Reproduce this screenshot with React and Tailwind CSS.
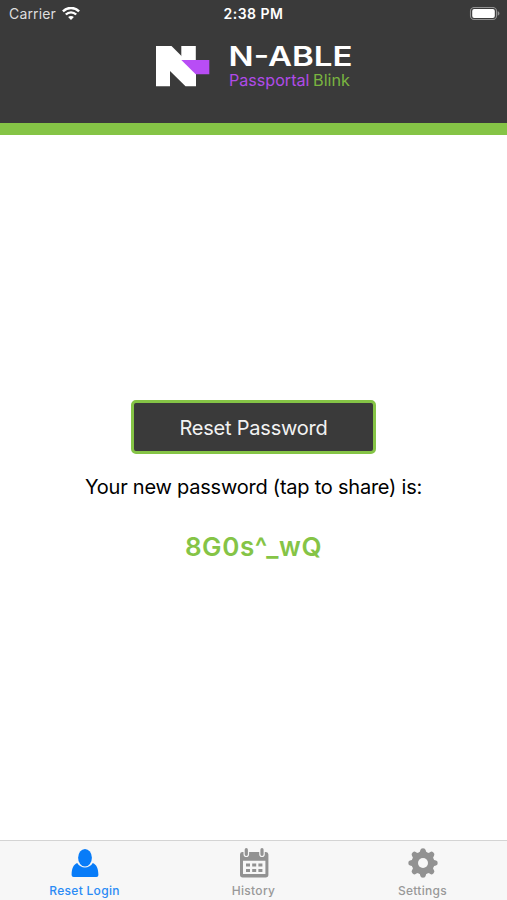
function Wifi() {
  return (
    <svg className="h-[14px] w-[18px]" viewBox="0 0 18 14" fill="none" stroke="#fff" strokeWidth="2.4">
      <path d="M0.9 4.3C5.5 -0.2 12.5 -0.2 17.1 4.3" />
      <path d="M3.8 7.5C6.8 4.6 11.2 4.6 14.2 7.5" />
      <path d="M9 13.1L6.1 10.1C7.7 8.5 10.3 8.5 11.9 10.1Z" fill="#fff" stroke="none" />
    </svg>
  );
}

function Battery() {
  return (
    <svg className="h-[14px] w-[32px]" viewBox="0 0 32 14">
      <rect x="1.5" y="0.5" width="26" height="12" rx="3.6" fill="none" stroke="#929292" strokeWidth="1.1" />
      <rect x="3.2" y="2" width="22.6" height="9" rx="2" fill="#fff" />
      <path d="M28.7 4.3C31 5 31 8 28.7 8.7Z" fill="#929292" />
    </svg>
  );
}

function Logo() {
  return (
    <svg className="h-[50px] w-[200px] overflow-visible" viewBox="0 0 200 50">
      <path d="M3 4H18.5L43 28.5V44.2H32.5L17 29V44.2H3Z" fill="#fff" />
      <path d="M28.3 4H42.8V18H28.3Z" fill="#fff" />
      <path d="M28.3 18H56.3V32.2H42.7Z" fill="#b84df5" />
      <text x="75.6" y="24" fill="#fff" fontFamily="Inter, sans-serif" fontWeight="600" fontSize="27" textLength="124" lengthAdjust="spacingAndGlyphs">N-ABLE</text>
      <text x="76" y="44.3" fill="#b04be8" fontFamily="Inter, sans-serif" fontSize="16.5" textLength="80.5" lengthAdjust="spacingAndGlyphs">Passportal</text>
      <text x="160" y="44.3" fill="#79b440" fontFamily="Inter, sans-serif" fontSize="16.5" textLength="37" lengthAdjust="spacingAndGlyphs">Blink</text>
    </svg>
  );
}

function PersonIcon() {
  return (
    <svg className="h-[32px] w-[32px]" viewBox="0 0 32 32" fill="#087cf8">
      <ellipse cx="16" cy="10.7" rx="6.9" ry="8.8" />
      <path d="M8.2 16.1C4.3 17.9 2.7 21.5 2.6 28Q2.6 30 4.6 30H27.4Q29.4 30 29.4 28C29.3 21.5 27.7 17.9 23.8 16.1C20.3 22 11.7 22 8.2 16.1Z" />
    </svg>
  );
}

function CalendarIcon() {
  return (
    <svg className="h-[32px] w-[32px]" viewBox="0 0 32 32">
      <path fillRule="evenodd" d="M4 5H28Q30.4 5 30.4 7.5V27.8Q30.4 30.5 27.7 30.5H4.7Q2 30.5 2 27.8V7.5Q2 5 4 5ZM5 13.8V27H27.4V13.8Z" fill="#929292" />
      <g stroke="#f7f7f7" strokeWidth="5.6" strokeLinecap="round"><path d="M8.3 3V7.3M24 3V7.3" /></g>
      <g stroke="#929292" strokeWidth="3.2" strokeLinecap="round"><path d="M8.3 2.7V7.3M24 2.7V7.3" /></g>
      <path d="M8 16.4H12V19.4H8ZM14.2 16.4H18.2V19.4H14.2ZM20.4 16.4H24.4V19.4H20.4ZM8 21.9H12V24.9H8ZM14.2 21.9H18.2V24.9H14.2ZM20.4 21.9H24.4V24.9H20.4Z" fill="#929292" />
    </svg>
  );
}

const teeth = [0, 45, 90, 135, 180, 225, 270, 315];

function GearIcon() {
  return (
    <svg className="h-[32px] w-[32px]" viewBox="0 0 32 32">
      <g fill="#929292">
        <circle cx="16" cy="16" r="11.2" />
        {teeth.map((angle) => (
          <path key={angle} d="M11.4 6.2Q13.2 5.1 13.4 3Q13.6 1.3 16 1.3Q18.4 1.3 18.6 3Q18.8 5.1 20.6 6.2Z" transform={`rotate(${angle} 16 16)`} />
        ))}
      </g>
      <circle cx="16" cy="16" r="5" fill="#f7f7f7" />
    </svg>
  );
}

function Tab({ icon, label, color }) {
  return (
    <button className={`flex flex-1 flex-col items-center pt-[6px] ${color}`}>
      {icon}
      <span className="mt-[4px] text-[12px] leading-[16px] font-medium tracking-[0.3px]">{label}</span>
    </button>
  );
}

export default function App() {
  return (
    <div className="flex h-[900px] w-[507px] flex-col overflow-hidden bg-white font-['Inter',sans-serif]">
      <header className="flex h-[135px] shrink-0 flex-col border-b-[12px] border-[#85c446] bg-[#3a3a3a]">
        <div className="grid h-[27px] grid-cols-3 items-center pr-[6px] pl-[9px] text-[14px] text-white">
          <div className="flex items-center gap-[6px]">
            <span className="tracking-[0.15px] text-[#dedede]">Carrier</span>
            <Wifi />
          </div>
          <span className="pr-[3px] text-center font-semibold tracking-[0.5px]">2:38 PM</span>
          <div className="flex justify-end"><Battery /></div>
        </div>
        <div className="mt-[15px] ml-[153px]"><Logo /></div>
      </header>
      <main className="flex flex-1 flex-col items-center pt-[265px]">
        <button className="h-[54px] w-[245px] rounded-[5px] border-3 border-[#85c446] bg-[#3a3a3a] pt-[2px] text-[20px] tracking-[-0.23px] text-[#f2f2f2]">Reset Password</button>
        <p className="mt-[19px] text-[20px] leading-[28px] tracking-[-0.23px] text-black">Your new password (tap to share) is:</p>
        <p className="mt-[28px] text-[26px] leading-[36px] font-semibold tracking-[0.6px] text-[#85c446]">8G0s^_wQ</p>
      </main>
      <nav className="flex h-[60px] shrink-0 border-t border-[#d4d4d4] bg-[#f7f7f7]">
        <Tab icon={<PersonIcon />} label="Reset Login" color="text-[#2a8bf5]" />
        <Tab icon={<CalendarIcon />} label="History" color="text-[#999999]" />
        <Tab icon={<GearIcon />} label="Settings" color="text-[#999999]" />
      </nav>
    </div>
  );
}
